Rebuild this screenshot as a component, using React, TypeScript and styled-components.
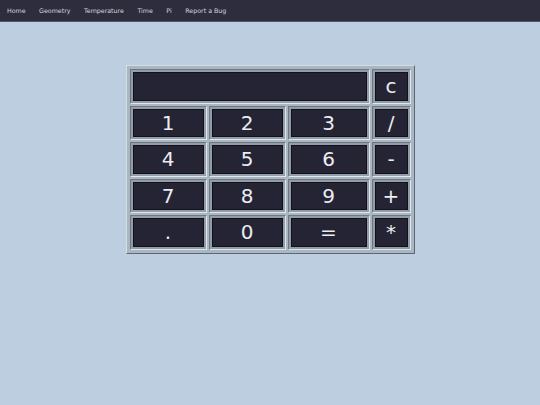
import React from 'react';
import styled, { createGlobalStyle } from 'styled-components';

const GlobalStyle = createGlobalStyle`
  html, body {
    margin: 0;
    padding: 0;
    background: #bdcee0;
    font-family: 'DejaVu Sans', Verdana, sans-serif;
  }
`;

const NavBar = styled.nav`
  display: flex;
  align-items: center;
  height: 21px;
  padding-left: 0;
  background: #2e2d3e;
  border-bottom: 1px solid #55556a;
`;

const NavLink = styled.span`
  padding: 0 6.5px 0 7px;
  font-size: 6.3px;
  color: #d6d6de;
  cursor: pointer;
`;

const Page = styled.main`
  display: flex;
  justify-content: center;
  padding-top: 43px;
`;

const Calculator = styled.div`
  display: grid;
  grid-template-columns: 77px 77px 82px 39px;
  grid-auto-rows: 34.5px;
  gap: 2px;
  padding: 3px;
  background: #aab6c2;
  border: 1px solid;
  border-color: #d4dde6 #5e6874 #5e6874 #d4dde6;
`;

const Cell = styled.div<{ span?: number }>`
  display: flex;
  grid-column: span ${(props) => props.span || 1};
  border: 1px solid;
  border-color: #6c7783 #dfe6ed #dfe6ed #6c7783;
`;

const Key = styled.button`
  flex: 1;
  margin: 0;
  padding: 0;
  background: #252434;
  border: 2px solid #939da7;
  box-shadow: inset 0 0 0 1px #121119;
  color: #ececf0;
  font-family: 'DejaVu Sans', Verdana, sans-serif;
  font-size: 20px;
  line-height: 1;
  cursor: pointer;
`;

const Display = styled.input`
  flex: 1;
  min-width: 0;
  margin: 0;
  padding: 0 6px;
  background: #252434;
  border: 2px solid #939da7;
  box-shadow: inset 0 0 0 1px #121119;
  color: #ececf0;
  font-family: 'DejaVu Sans', Verdana, sans-serif;
  font-size: 20px;
  outline: none;
`;

const links = ['Home', 'Geometry', 'Temperature', 'Time', 'Pi', 'Report a Bug'];

const keys = ['1', '2', '3', '/', '4', '5', '6', '-', '7', '8', '9', '+', '.', '0', '=', '*'];

export default function App() {
  return (
    <>
      <GlobalStyle />
      <NavBar>
        {links.map((label) => (
          <NavLink key={label}>{label}</NavLink>
        ))}
      </NavBar>
      <Page>
        <Calculator>
          <Cell span={3}>
            <Display readOnly value="" />
          </Cell>
          <Cell>
            <Key>c</Key>
          </Cell>
          {keys.map((k) => (
            <Cell key={k}>
              <Key>{k}</Key>
            </Cell>
          ))}
        </Calculator>
      </Page>
    </>
  );
}
